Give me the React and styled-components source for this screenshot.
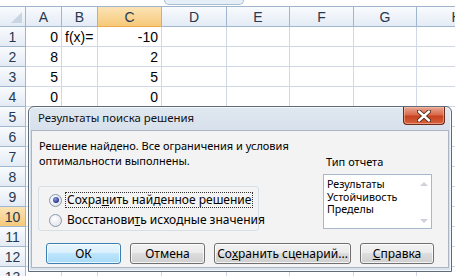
import React from "react";
import styled, { createGlobalStyle, css } from "styled-components";

const Global = createGlobalStyle`
  html, body { margin: 0; padding: 0; background: #fff; }
  body { width: 455px; height: 276px; overflow: hidden; }
`;

const Page = styled.div`
  position: relative;
  width: 455px;
  height: 276px;
  overflow: hidden;
  background: #fff;
  font-family: "Liberation Sans", Arial, sans-serif;
`;

const TopBar = styled.div`
  height: 6px;
  border-bottom: 1px solid #9fb4cc;
  background: #fff;
  display: flex;
  padding-left: 164px;
`;

const ExpandTab = styled.div`
  width: 78px;
  height: 4px;
  border: 1px solid #a9bdd3;
  border-top: none;
  border-radius: 0 0 6px 6px;
  background: #e6eef8;
`;

const Grid = styled.div`
  display: grid;
  grid-template-columns: 26px 36px 36px 64px 65px 63px 64px 63px 80px;
  grid-auto-rows: 20px;
`;

const headerBg = css`
  background: linear-gradient(#f9fbfd, #e4ebf5);
  color: #27384f;
`;
const activeBg = css`
  background: linear-gradient(#fbe3b5, #f6c97a);
  color: #27384f;
`;

const Corner = styled.div`
  position: relative;
  ${headerBg};
  border-right: 1px solid #9eb6ce;
  border-bottom: 1px solid #9eb6ce;
  box-sizing: border-box;
  &::after {
    content: "";
    position: absolute;
    right: 3px;
    bottom: 3px;
    border-left: 11px solid transparent;
    border-bottom: 11px solid #c9d5e3;
  }
`;

const ColHead = styled.div`
  ${(p) => (p.$active ? activeBg : headerBg)};
  border-right: 1px solid #9eb6ce;
  border-bottom: 1px solid ${(p) => (p.$active ? "#f2a94a" : "#9eb6ce")};
  box-sizing: border-box;
  display: flex;
  align-items: center;
  justify-content: center;
  font-size: 14px;
`;

const RowHead = styled.div`
  ${(p) => (p.$active ? activeBg : headerBg)};
  border-right: 1px solid ${(p) => (p.$active ? "#f2a94a" : "#9eb6ce")};
  border-bottom: 1px solid #9eb6ce;
  box-sizing: border-box;
  display: flex;
  align-items: center;
  justify-content: center;
  font-size: 14px;
`;

const Cell = styled.div`
  border-right: 1px solid #d0d7e5;
  border-bottom: 1px solid #d0d7e5;
  box-sizing: border-box;
  display: flex;
  align-items: center;
  justify-content: ${(p) => (p.$text ? "flex-start" : "flex-end")};
  padding: 0 3px;
  font-size: 14px;
  color: #000;
  white-space: nowrap;
`;

/* dialog window */
const Window = styled.div`
  position: absolute;
  left: 28px;
  top: 106px;
  width: 424px;
  height: 166px;
  box-sizing: border-box;
  border: 1px solid #5d6a78;
  border-radius: 6px 6px 0 0;
  background: linear-gradient(#dfe7f0, #d6e0ea 30px, #d9e2ec);
  box-shadow: inset 0 0 0 1px rgba(255, 255, 255, 0.7);
  display: flex;
  flex-direction: column;
  font-family: "Noto Sans", "Open Sans", sans-serif;
  color: #000;
`;

const TitleBar = styled.div`
  height: 23px;
  display: flex;
  align-items: flex-start;
  justify-content: space-between;
  padding: 0 6px 0 9px;
`;

const Title = styled.div`
  font-size: 11.4px;
  line-height: 22px;
  color: #111;
`;

const CloseBtn = styled.div`
  width: 42px;
  height: 18px;
  box-sizing: border-box;
  border: 1px solid #6e2a1a;
  border-top: none;
  border-radius: 0 0 4px 4px;
  background: linear-gradient(#eaa892, #d86b4c 45%, #c8421f 55%, #d5643f);
  box-shadow: inset 0 0 0 1px rgba(255, 200, 180, 0.5);
  display: flex;
  align-items: center;
  justify-content: center;
`;

const Body = styled.div`
  flex: 1;
  margin: 0 2px 3px 2px;
  border: 1px solid #aab6c4;
  background: #f3f3f3;
  padding: 7px 0 0 6px;
  box-sizing: border-box;
  font-size: 11px;
`;

const TopRow = styled.div`
  display: flex;
`;

const LeftCol = styled.div`
  width: 221px;
  flex: none;
`;

const Message = styled.div`
  padding-left: 1px;
  line-height: 15px;
  white-space: nowrap;
`;

const GroupBox = styled.div`
  margin-top: 18px;
  height: 45px;
  box-sizing: border-box;
  border: 1px solid #d5dfe5;
  border-radius: 3px;
  padding: 3px 0 0 10px;
  font-size: 12px;
`;

const RadioRow = styled.div`
  height: 20px;
  display: flex;
  align-items: center;
  white-space: nowrap;
`;

const Radio = styled.span`
  width: 11px;
  height: 11px;
  border-radius: 50%;
  border: 1px solid #8b98a8;
  background: radial-gradient(circle at 40% 35%, #ffffff, #d9dee4);
  display: flex;
  align-items: center;
  justify-content: center;
  margin-right: 3px;
  flex: none;
  &::after {
    content: "";
    display: ${(p) => (p.$checked ? "block" : "none")};
    width: 6px;
    height: 6px;
    border-radius: 50%;
    background: radial-gradient(circle at 40% 35%, #8b9ce8, #26348a 70%);
  }
`;

const Label = styled.span`
  padding: 0 1px;
  border: 1px dotted ${(p) => (p.$focus ? "#333" : "transparent")};
  line-height: 14px;
`;

const RightCol = styled.div`
  margin-left: 64px;
  padding-top: 16px;
`;

const ReportLabel = styled.div`
  padding-left: 3px;
  line-height: 15px;
`;

const ListBox = styled.div`
  margin-top: 5px;
  width: 109px;
  height: 55px;
  box-sizing: border-box;
  border: 1px solid #a7b8cc;
  background: #fff;
  display: flex;
`;

const ListItems = styled.div`
  flex: 1;
  padding: 3px 0 0 3px;
  line-height: 12.5px;
  font-size: 10.7px;
  white-space: nowrap;
`;

const ScrollCol = styled.div`
  width: 14px;
  display: flex;
  flex-direction: column;
  justify-content: space-between;
  align-items: center;
  padding: 7px 0 5px;
`;

const Arrow = styled.span`
  width: 0;
  height: 0;
  border-left: 4px solid transparent;
  border-right: 4px solid transparent;
  ${(p) =>
    p.$up
      ? "border-bottom: 4px solid #cdd2d8;"
      : "border-top: 4px solid #cdd2d8;"}
`;

const ButtonRow = styled.div`
  display: flex;
  gap: 9px;
  margin-top: 12px;
  padding-left: 8px;
`;

const Button = styled.div`
  width: ${(p) => p.$w}px;
  height: 21px;
  box-sizing: border-box;
  border: 1px solid ${(p) => (p.$default ? "#3c7fb1" : "#707070")};
  border-radius: 3px;
  background: ${(p) =>
    p.$default
      ? "linear-gradient(#eaf6fd, #d9f0fc 45%, #bee6fd 50%, #a7d9f5)"
      : "linear-gradient(#f2f2f2, #ebebeb 45%, #dddddd 50%, #cfcfcf)"};
  box-shadow: inset 0 0 0 1px rgba(255, 255, 255, 0.75);
  display: flex;
  align-items: center;
  justify-content: center;
  font-size: 12px;
  white-space: nowrap;
`;

const U = styled.span`
  text-decoration: underline;
`;

const rows = [
  ["0", "f(x)=", "-10"],
  ["8", "", "2"],
  ["5", "", "5"],
  ["0", "", "0"],
];
const colNames = ["A", "B", "C", "D", "E", "F", "G", "H"];

export default function App() {
  const gridRows = [];
  for (let r = 1; r <= 13; r++) {
    const data = rows[r - 1] || ["", "", ""];
    gridRows.push(
      <React.Fragment key={r}>
        <RowHead $active={r === 10}>{r}</RowHead>
        <Cell>{data[0]}</Cell>
        <Cell $text>{data[1]}</Cell>
        <Cell>{data[2]}</Cell>
        <Cell />
        <Cell />
        <Cell />
        <Cell />
        <Cell />
      </React.Fragment>
    );
  }

  return (
    <Page>
      <Global />
      <TopBar>
        <ExpandTab />
      </TopBar>
      <Grid>
        <Corner />
        {colNames.map((c) => (
          <ColHead key={c} $active={c === "C"}>
            {c}
          </ColHead>
        ))}
        {gridRows}
      </Grid>

      <Window>
        <TitleBar>
          <Title>Результаты поиска решения</Title>
          <CloseBtn>
            <svg width="14" height="12" viewBox="0 0 14 12">
              <path
                d="M2 1.5 L12 10.5 M12 1.5 L2 10.5"
                stroke="#4a2418"
                strokeWidth="4.2"
                strokeLinecap="round"
              />
              <path
                d="M2 1.5 L12 10.5 M12 1.5 L2 10.5"
                stroke="#fff"
                strokeWidth="2.4"
                strokeLinecap="round"
              />
            </svg>
          </CloseBtn>
        </TitleBar>
        <Body>
          <TopRow>
            <LeftCol>
              <Message>
                Решение найдено. Все ограничения и условия
                <br />
                оптимальности выполнены.
              </Message>
              <GroupBox>
                <RadioRow>
                  <Radio $checked />
                  <Label $focus>
                    Сохра<U>н</U>ить найденное решение
                  </Label>
                </RadioRow>
                <RadioRow>
                  <Radio />
                  <Label>
                    Восстанови<U>т</U>ь исходные значения
                  </Label>
                </RadioRow>
              </GroupBox>
            </LeftCol>
            <RightCol>
              <ReportLabel>Тип отчета</ReportLabel>
              <ListBox>
                <ListItems>
                  Результаты
                  <br />
                  Устойчивость
                  <br />
                  Пределы
                </ListItems>
                <ScrollCol>
                  <Arrow $up />
                  <Arrow />
                </ScrollCol>
              </ListBox>
            </RightCol>
          </TopRow>
          <ButtonRow>
            <Button $w={75} $default>
              ОК
            </Button>
            <Button $w={75}>Отмена</Button>
            <Button $w={137}>
              Со<U>х</U>ранить сценарий...
            </Button>
            <Button $w={74}>
              <U>С</U>правка
            </Button>
          </ButtonRow>
        </Body>
      </Window>
    </Page>
  );
}
